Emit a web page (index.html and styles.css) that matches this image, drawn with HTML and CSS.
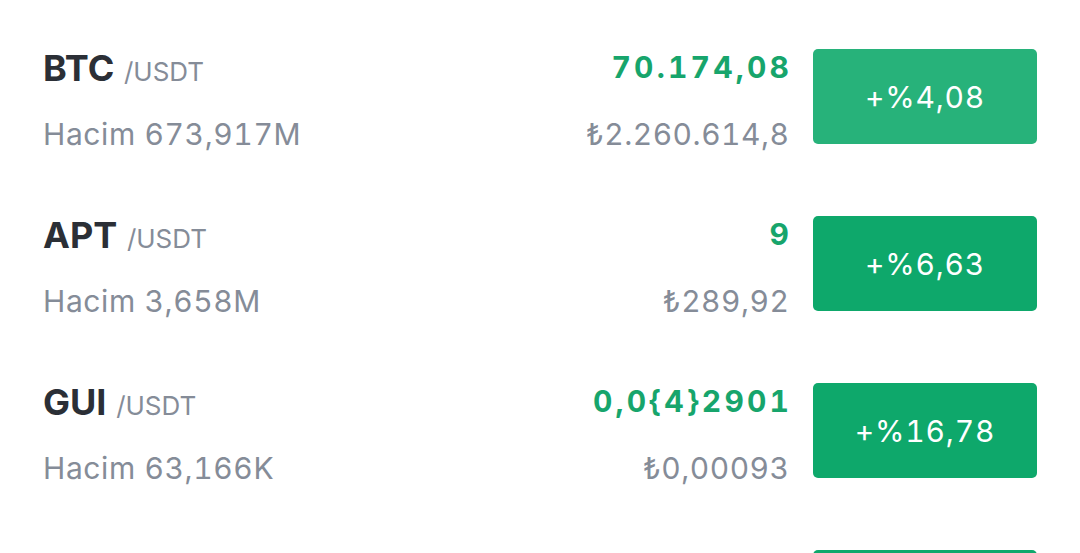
FILE: index.html
```html
<!DOCTYPE html>
<html lang="tr">
<head>
    <meta charset="UTF-8">
    <meta name="viewport" content="width=device-width, initial-scale=1.0">
    <title>Piyasalar</title>
    <link rel="stylesheet" href="styles.css">
</head>
<body>
    <div class="market-list">
        <div class="market-row">
            <div class="pair">
                <div class="pair-name">BTC <span class="quote">/USDT</span></div>
                <div class="volume">Hacim 673,917M</div>
            </div>
            <div class="price">
                <div class="last">70.174,08</div>
                <div class="fiat">₺2.260.614,8</div>
            </div>
            <div class="change change-light">+%4,08</div>
        </div>
        <div class="market-row">
            <div class="pair">
                <div class="pair-name">APT <span class="quote">/USDT</span></div>
                <div class="volume">Hacim 3,658M</div>
            </div>
            <div class="price">
                <div class="last">9</div>
                <div class="fiat">₺289,92</div>
            </div>
            <div class="change">+%6,63</div>
        </div>
        <div class="market-row">
            <div class="pair">
                <div class="pair-name">GUI <span class="quote">/USDT</span></div>
                <div class="volume">Hacim 63,166K</div>
            </div>
            <div class="price">
                <div class="last">0,0{4}2901</div>
                <div class="fiat">₺0,00093</div>
            </div>
            <div class="change">+%16,78</div>
        </div>
        <div class="market-row">
            <div class="pair">
                <div class="pair-name">&nbsp;</div>
                <div class="volume">&nbsp;</div>
            </div>
            <div class="price">
                <div class="last">&nbsp;</div>
                <div class="fiat">&nbsp;</div>
            </div>
            <div class="change"></div>
        </div>
    </div>
</body>
</html>
```

FILE: styles.css
```css
body {
    margin: 0;
    background-color: #ffffff;
    font-family: Inter, "Noto Sans", sans-serif;
    font-variant-numeric: tabular-nums;
    overflow: hidden;
}

.market-list {
    padding-top: 13px;
}

.market-row {
    display: flex;
    align-items: flex-start;
    padding: 36px 43px;
}

.pair {
    flex: 1;
    display: flex;
    flex-direction: column;
}

.pair-name {
    font-size: 36px;
    line-height: 39px;
    font-weight: 700;
    color: #2b2f36;
}

.quote {
    font-size: 26px;
    line-height: 20px;
    font-weight: 400;
    color: #858c98;
}

.volume {
    margin-top: 36px;
    font-size: 30px;
    line-height: 20px;
    letter-spacing: 0.6px;
    color: #858c98;
}

.price {
    display: flex;
    flex-direction: column;
    align-items: flex-end;
    margin-right: 24px;
}

.last {
    font-size: 30px;
    line-height: 36px;
    font-weight: 700;
    letter-spacing: 3.2px;
    margin-right: -3.2px;
    color: #17a56c;
}

.fiat {
    margin-top: 39px;
    font-size: 30px;
    line-height: 20px;
    letter-spacing: 0.5px;
    margin-right: -0.5px;
    color: #858c98;
}

.change {
    width: 224px;
    height: 95px;
    border-radius: 5px;
    background-color: #0ea86b;
    color: #ffffff;
    font-size: 30px;
    letter-spacing: 0.8px;
    display: flex;
    align-items: center;
    justify-content: center;
}

.change-light {
    background-color: #27b27a;
}
```
